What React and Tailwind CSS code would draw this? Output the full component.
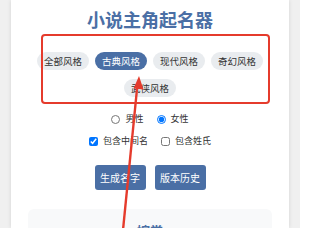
const STYLES = ["全部风格", "古典风格", "现代风格", "奇幻风格", "武侠风格"];

const FONT = { fontFamily: '"Noto Sans CJK SC", "Noto Sans", sans-serif' };

export default function App() {
  return (
    <div className="relative h-[228px] w-[300px] overflow-hidden bg-[#f0f0f0] px-[11px]" style={FONT}>
      <div className="h-full bg-white px-[17px] pt-[7px] shadow-[0_0_4px_rgba(0,0,0,0.12)]">
        <h1 className="text-center text-[18px] font-bold leading-[24px] text-[#4a6fa5]">小说主角起名器</h1>

        <div className="mt-[21px] flex flex-wrap justify-center gap-x-[6px] gap-y-[9px]">
          {STYLES.map((s, i) => (
            <span
              key={s}
              className={
                i === 1
                  ? "rounded-full bg-[#4a6fa5] px-[7px] py-[3px] text-[9.5px] leading-[12px] text-white"
                  : "rounded-full bg-[#e9ecef] px-[7px] py-[3px] text-[9.5px] leading-[12px] text-[#333]"
              }
            >
              {s}
            </span>
          ))}
        </div>

        <div className="mt-[15px] flex h-[14px] items-center justify-center gap-[13px] text-[9px] text-[#333]">
          <label className="flex items-center gap-[5px]">
            <input type="radio" name="gender" className="m-0 h-[9px] w-[9px]" />
            男性
          </label>
          <label className="flex items-center gap-[5px]">
            <input type="radio" name="gender" defaultChecked className="m-0 h-[9px] w-[9px]" />
            女性
          </label>
        </div>

        <div className="mt-[8px] flex h-[14px] items-center justify-center gap-[13px] text-[9px] text-[#333]">
          <label className="flex items-center gap-[5px]">
            <input type="checkbox" defaultChecked className="m-0 h-[9px] w-[9px]" />
            包含中间名
          </label>
          <label className="flex items-center gap-[5px]">
            <input type="checkbox" className="m-0 h-[9px] w-[9px]" />
            包含姓氏
          </label>
        </div>

        <div className="mt-[17px] flex justify-center gap-[9px]">
          <button className="h-[25px] w-[51px] rounded-[3px] bg-[#4a6fa5] text-[10px] text-white">生成名字</button>
          <button className="h-[25px] w-[51px] rounded-[3px] bg-[#4a6fa5] text-[10px] text-white">版本历史</button>
        </div>

        <div className="mt-[19px] h-[40px] rounded-[6px] bg-[#f8f9fa] pt-[12px] text-center text-[13px] font-bold text-[#4a6fa5]">
          婉棠
        </div>
      </div>

      {/* annotation overlay */}
      <div className="absolute left-[41px] top-[34px] h-[70px] w-[229px] rounded-[4px] border-2 border-[#e53b2c]" />
      <svg className="absolute left-0 top-0" width="300" height="228" viewBox="0 0 300 228">
        <line x1="123" y1="230" x2="137.5" y2="84" stroke="#e53b2c" strokeWidth="2.4" />
        <polygon points="139,76 133.5,88.5 143.5,89.5" fill="#e53b2c" />
      </svg>
    </div>
  );
}
